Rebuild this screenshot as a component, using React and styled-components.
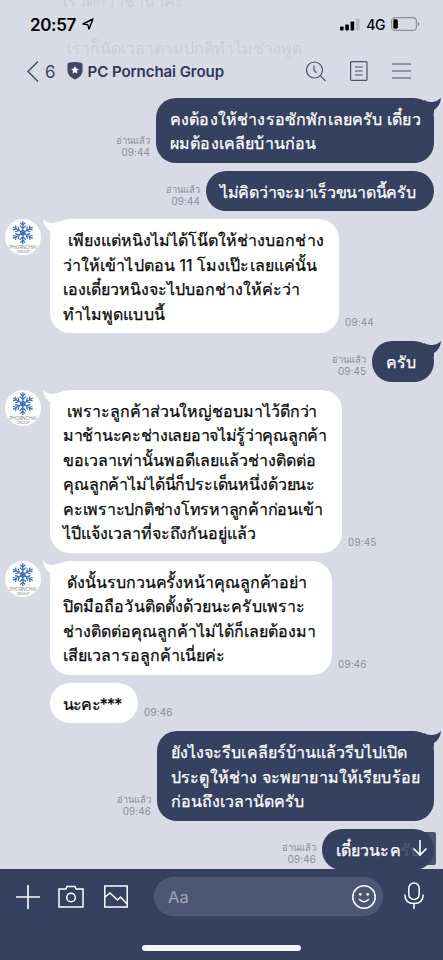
import React from "react";
import styled, { createGlobalStyle } from "styled-components";

const NAVY = "#35415f";

const Global = createGlobalStyle`
  * { box-sizing: border-box; }
  html, body { margin: 0; background: #d8dae5; }
  body { overflow: hidden; font-family: "Inter", "Liberation Sans", sans-serif; }
`;

const Screen = styled.main`
  display: flex;
  flex-direction: column;
  width: 443px;
  height: 960px;
  overflow: hidden;
  background: #d8dae5;
`;

const Header = styled.header`
  position: relative;
  flex: none;
  height: 97.6px;
  color: #000;
`;

const StatusBar = styled.div`
  display: flex;
  align-items: center;
  height: 48px;
  padding: 0 23px 0 30px;
`;

const Clock = styled.span`
  margin: 1px 6px 0 0;
  font-size: 17px;
  font-weight: 600;
  letter-spacing: -0.35px;
`;

const Network = styled.span`
  margin: 1px 6px 0 6px;
  font-size: 14px;
  font-weight: 500;
  letter-spacing: -0.4px;
`;

const Grow = styled.div`
  flex: 1;
`;

const NavBar = styled.div`
  display: flex;
  align-items: center;
  height: 46px;
  padding: 0 32px 0 27px;
  color: #3d4664;
`;

const UnreadCount = styled.span`
  margin: 1px 11px 0 6px;
  font-size: 17px;
`;

const Title = styled.h1`
  margin: 0 0 0 5px;
  font-size: 15.1px;
  font-weight: 600;
  letter-spacing: -0.1px;
  color: #2f3857;
  white-space: nowrap;
`;

const NavIcons = styled.div`
  display: flex;
  align-items: center;
  gap: 24px;
`;

const Ghost = styled.div`
  position: absolute;
  left: ${(p) => p.$x}px;
  top: ${(p) => p.$y}px;
  font-size: 16px;
  line-height: 24px;
  white-space: pre;
  color: #cbcdd8;
  filter: blur(0.6px);
`;

const Chat = styled.section`
  display: flex;
  flex-direction: column;
  gap: 7.85px;
  height: 771.4px;
  overflow: hidden;
`;

const Row = styled.div`
  display: flex;
  flex: none;
  align-items: flex-end;
  justify-content: ${(p) => (p.$mine ? "flex-end" : "flex-start")};
  padding: ${(p) => (p.$mine ? "0 9px 0 0" : "0 0 0 5px")};
`;

const AvatarSlot = styled.div`
  align-self: flex-start;
  width: 45px;
  height: 36px;
`;

const Bubble = styled.div`
  position: relative;
  width: ${(p) => p.$width}px;
  padding: 9.1px 0 7.1px ${(p) => (p.$mine ? 14 : 13)}px;
  border-radius: 20px;
  background: ${(p) => (p.$mine ? NAVY : "#fff")};
  color: ${(p) => (p.$mine ? "#fff" : "#080808")};
`;

const Line = styled.div`
  height: 24.5px;
  font-size: 16px;
  line-height: 24.5px;
  letter-spacing: ${(p) => p.$tracking}px;
  white-space: pre;
  -webkit-text-stroke: 0.25px currentColor;
`;

const Tail = styled.svg`
  position: absolute;
  top: 0;
  overflow: visible;
  ${(p) => (p.$mine ? "right: -7px;" : "left: -7px; transform: scaleX(-1);")}
`;

const Meta = styled.div`
  margin: ${(p) => (p.$mine ? "0 6px 3.5px 0" : "0 0 4px 6px")};
  font-size: 9.8px;
  line-height: 12px;
  letter-spacing: ${(p) => (p.$mine ? 0.15 : 0.2)}px;
  text-align: right;
  color: #8b8e9d;
  white-space: nowrap;
`;

const ReadMark = styled.div`
  font-size: 9.3px;
  letter-spacing: 0;
`;

const ScrollDown = styled.div`
  position: absolute;
  top: 3px;
  right: -2px;
  display: flex;
  align-items: center;
  justify-content: center;
  width: 34px;
  height: 33px;
  padding-left: 2px;
  border-radius: 2px;
  background: rgba(53, 65, 95, 0.88);
`;

const Footer = styled.footer`
  display: flex;
  flex-direction: column;
  flex: none;
  height: 91px;
  background: ${NAVY};
`;

const Composer = styled.div`
  display: flex;
  align-items: center;
  height: 56px;
  padding: 0 19px 0 16px;
`;

const Tools = styled.div`
  display: flex;
  align-items: center;
  gap: 20px;
  margin-right: 26px;
  & > :nth-child(2) {
    margin-left: -2px;
  }
`;

const Field = styled.div`
  display: flex;
  align-items: center;
  justify-content: space-between;
  width: 229px;
  height: 39px;
  padding: 0 6px 0 13px;
  border: 1px solid #535d78;
  border-radius: 20px;
  background: #4d5673;
  color: #a2a7b7;
  font-size: 16.5px;
`;

const MicSlot = styled.div`
  display: flex;
  margin: 0 0 2px auto;
`;

const HomeBar = styled.div`
  width: 159px;
  height: 6px;
  margin: 20px 0 0 142px;
  border-radius: 3px;
  background: #f4f5f8;
`;

const Avatar = () => (
  <svg width="36" height="36" viewBox="0 0 36 36">
    <circle cx="18" cy="18" r="18" fill="#fff" />
    <g stroke="#3f6fb5" strokeWidth="1.25" fill="none">
      {[0, 60, 120, 180, 240, 300].map((a) => (
        <g key={a} transform={`rotate(${a} 17.8 13.7)`}>
          <path d="M17.8 13.7V2.3M15.3 3.800l2.500 2.400 2.500-2.400M14.800 6.600l3 2.900 3-2.900" />
        </g>
      ))}
      <circle cx="17.800" cy="13.700" r="2.200" />
    </g>
    <text x="18" y="30.200" textAnchor="middle" fontSize="4.800" textLength="27" fill="#8d8d92" fontFamily="Inter, sans-serif">PHORNCHAI</text>
    <text x="18" y="34" textAnchor="middle" fontSize="4" textLength="13" fill="#8d8d92" fontFamily="Inter, sans-serif">GROUP</text>
  </svg>
);

// Each line is [text, letter spacing in px].
const messages = [
  { mine: true, tail: true, width: 278, time: "09:44", lines: [["คงต้องให้ช่างรอซักพักเลยครับ เดี๋ยว", 0.16], ["ผมต้องเคลียบ้านก่อน", 0.16]] },
  { mine: true, width: 228, time: "09:44", lines: [["ไม่คิดว่าจะมาเร็วขนาดนี้ครับ", -0.26]] },
  { tail: true, width: 289, time: "09:44", lines: [[" เพียงแต่หนิงไม่ได้โน๊ตให้ช่างบอกช่าง", 0.04], ["ว่าให้เข้าไปตอน 11 โมงเป๊ะเลยแค่นั้น", 0.07], ["เองเดี๋ยวหนิงจะไปบอกช่างให้ค่ะว่า", 0], ["ทำไมพูดแบบนี้", 0.08]] },
  { mine: true, tail: true, width: 62, time: "09:45", lines: [["ครับ", 0]] },
  { tail: true, width: 292, time: "09:45", lines: [[" เพราะลูกค้าส่วนใหญ่ชอบมาไว้ดีกว่า", -0.08], ["มาช้านะคะช่างเลยอาจไม่รู้ว่าคุณลูกค้า", -0.3], ["ขอเวลาเท่านั้นพอดีเลยแล้วช่างติดต่อ", 0], ["คุณลูกค้าไม่ได้นี่ก็ประเด็นหนึ่งด้วยนะ", -0.15], ["คะเพราะปกติช่างโทรหาลูกค้าก่อนเข้า", -0.24], ["ไปีแจ้งเวลาที่จะถึงกันอยู่แล้ว", -0.04]] },
  { tail: true, width: 282, time: "09:46", lines: [[" ดังนั้นรบกวนครั้งหน้าคุณลูกค้าอย่า", -0.1], ["ปิดมือถือวันติดตั้งด้วยนะครับเพราะ", 0.08], ["ช่างติดต่อคุณลูกค้าไม่ได้ก็เลยต้องมา", 0], ["เสียเวลารอลูกค้าเนี่ยค่ะ", 0.08]] },
  { width: 88, time: "09:46", lines: [["นะคะ***", -0.8]] },
  { mine: true, tail: true, width: 277, time: "09:46", lines: [["ยังไงจะรีบเคลียร์บ้านแล้วรีบไปเปิด", 0.06], ["ประตูให้ช่าง จะพยายามให้เรียบร้อย", 0.13], ["ก่อนถึงเวลานัดครับ", 0]] },
  { mine: true, width: 112, time: "09:46", scroll: true, lines: [["เดี๋ยวนะครับ", 0.1]] },
];

function Message({ m }) {
  const meta = (
    <Meta $mine={m.mine}>
      {m.mine && <ReadMark>อ่านแล้ว</ReadMark>}
      <div>{m.time}</div>
    </Meta>
  );
  return (
    <Row $mine={m.mine}>
      {m.mine ? meta : <AvatarSlot>{m.tail && <Avatar />}</AvatarSlot>}
      <Bubble $mine={m.mine} $width={m.width}>
        {m.tail && (
          <Tail $mine={m.mine} width="24" height="20" viewBox="0 0 24 20">
            <path d="M7 2Q11 4.500 15.500 4Q21 3.200 24 -.1Q23.500 7.500 17 12V16L7 9Z" fill={m.mine ? NAVY : "#fff"} />
          </Tail>
        )}
        {m.lines.map(([text, tracking]) => (
          <Line key={text} $tracking={tracking}>{text}</Line>
        ))}
        {m.scroll && (
          <ScrollDown>
            <svg width="16" height="18" viewBox="0 0 16 18" fill="none" stroke="#fff" strokeWidth="1.600">
              <path d="M8 1V16M1.500 9.500L8 16l6.500-6.500" />
            </svg>
          </ScrollDown>
        )}
      </Bubble>
      {!m.mine && meta}
    </Row>
  );
}

export default function App() {
  return (
    <Screen>
      <Global />
      <Header>
        <Ghost $x={63} $y={-11}>เรวดกว่าชานาคะ</Ghost>
        <Ghost $x={67} $y={36}>เราก็นัดเวลาตามปกติทำไมช่างพูด</Ghost>
        <StatusBar>
          <Clock>20:57</Clock>
          <svg width="12" height="12" viewBox="0 0 12 12" fill="none" stroke="#000" strokeWidth="1.400" strokeLinejoin="round">
            <path d="M1 6L11 1 7 11 5.800 6.600Z" />
          </svg>
          <Grow />
          <svg width="20" height="13" viewBox="0 0 20 13">
            <rect x="0" y="8.500" width="3.600" height="4" rx=".8" />
            <rect x="5.300" y="6.500" width="3.600" height="6" rx=".8" />
            <rect x="10.600" y="3.500" width="3.600" height="9" rx=".8" />
            <rect x="15.900" y="0.500" width="3.600" height="12" rx=".8" fill="#b7b9c3" />
          </svg>
          <Network>4G</Network>
          <svg width="29" height="14" viewBox="0 0 29 14">
            <rect x=".6" y=".6" width="24.800" height="12.800" rx="3.500" fill="none" stroke="#8f919b" strokeWidth="1.100" />
            <rect x="2.300" y="2.300" width="4.500" height="9.400" rx="1.400" />
            <path d="M26.800 4.800Q28.500 5.500 28.500 7T26.800 9.200Z" fill="#8f919b" />
          </svg>
        </StatusBar>
        <NavBar>
          <svg width="12" height="21" viewBox="0 0 12 21" fill="none" stroke="#3d4664" strokeWidth="1.400">
            <path d="M11 .5L1 10.500l10 10" />
          </svg>
          <UnreadCount>6</UnreadCount>
          <svg width="16" height="18" viewBox="0 0 16 18">
            <path d="M2 .7Q8-.6 14 .7 15.500 1 15.500 2.500V9Q15.500 14 8 17.500 .5 14 .5 9V2.500Q.5 1 2 .7Z" fill="#3d4664" />
            <path d="M8 4l1.200 2.500 2.700.4-2 1.900.5 2.700L8 10.200l-2.400 1.300.5-2.700-2-1.900 2.700-.4Z" fill="#fff" />
          </svg>
          <Title>PC Pornchai Group</Title>
          <Grow />
          <NavIcons>
            <svg width="20" height="21" viewBox="0 0 20 21" fill="none" stroke="#4a516b" strokeWidth="1.200">
              <circle cx="8.500" cy="9" r="8" />
              <path d="M14.300 14.700L19.500 20M8 4.500V9.300L10.500 11.700" />
            </svg>
            <svg width="18" height="20" viewBox="0 0 18 20" fill="none" stroke="#4a516b" strokeWidth="1.200">
              <rect x=".6" y=".6" width="16.400" height="18.800" rx="1" />
              <path d="M5 6H12.500M5 10H12.500M5 14H12.500" />
            </svg>
            <svg width="19" height="16" viewBox="0 0 19 16" stroke="#4a516b" strokeWidth="1.200">
              <path d="M0 1H19M0 8H19M0 15H19" />
            </svg>
          </NavIcons>
        </NavBar>
      </Header>
      <Chat>
        {messages.map((m, i) => (
          <Message key={i} m={m} />
        ))}
      </Chat>
      <Footer>
        <Composer>
          <Tools>
            <svg width="24" height="24" viewBox="0 0 24 24" stroke="#fff" strokeWidth="1.600">
              <path d="M0 12H24M12 0V24" />
            </svg>
            <svg width="26" height="24" viewBox="0 0 26 24" fill="none" stroke="#fff" strokeWidth="1.500">
              <path d="M1 4H8L9 1.500H17L18 4H25V22H1Z" />
              <circle cx="13" cy="12.500" r="4.300" />
            </svg>
            <svg width="24" height="23" viewBox="0 0 24 23" fill="none" stroke="#fff" strokeWidth="1.500">
              <rect x=".8" y="1" width="22.400" height="21" />
              <path d="M1 12L6 8l7.500 7 3-3 6.500 7" />
            </svg>
          </Tools>
          <Field>
            Aa
            <svg width="24" height="24" viewBox="0 0 24 24" fill="none" stroke="#fff" strokeWidth="1.500" strokeLinecap="round">
              <circle cx="12" cy="12" r="11.200" />
              <path d="M7.500 14.500Q12 19 16.500 14.500" />
              <circle cx="8.300" cy="9.300" r=".6" fill="#fff" />
              <circle cx="15.700" cy="9.300" r=".6" fill="#fff" />
            </svg>
          </Field>
          <MicSlot>
            <svg width="20" height="28" viewBox="0 0 20 28" fill="none" stroke="#fff" strokeWidth="1.500">
              <rect x="4.800" y="1" width="10.400" height="16.500" rx="5.200" />
              <path d="M.8 12.500Q1 21.500 10 21.500T19.200 12.500M10 21.500V27" />
            </svg>
          </MicSlot>
        </Composer>
        <HomeBar />
      </Footer>
    </Screen>
  );
}
